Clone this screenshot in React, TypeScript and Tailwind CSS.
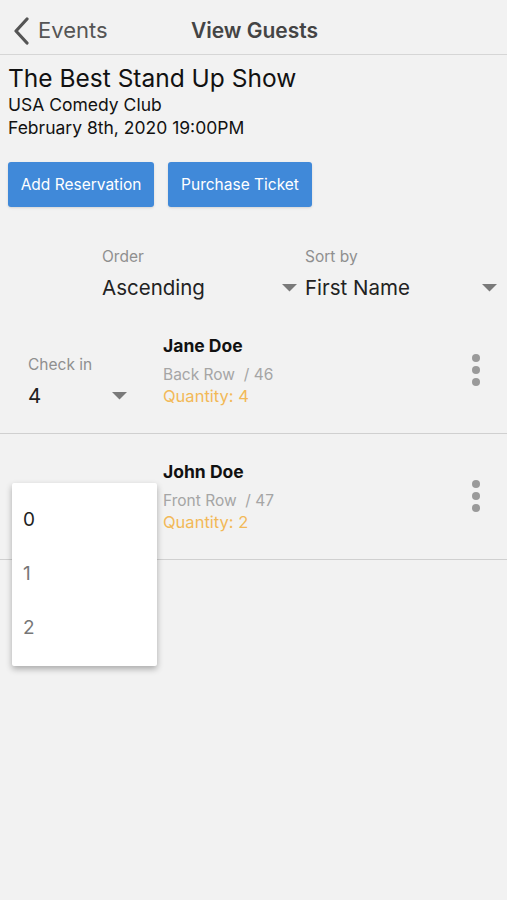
import React from 'react';

const guests = [
  { name: 'Jane Doe', row: 'Back Row', seat: 46, quantity: 4, checkIn: '4' },
  { name: 'John Doe', row: 'Front Row', seat: 47, quantity: 2, checkIn: '' },
];

function Caret({ className = '' }: { className?: string }) {
  return (
    <svg width="15" height="8" viewBox="0 0 15 8" className={className}>
      <path d="M0 0 L15 0 L7.5 7.5 Z" fill="#7a7a7a" />
    </svg>
  );
}

function Dots() {
  return (
    <div className="flex flex-col gap-[4px] items-center">
      <span className="w-[8px] h-[8px] rounded-full bg-[#9a9a9a]" />
      <span className="w-[8px] h-[8px] rounded-full bg-[#9a9a9a]" />
      <span className="w-[8px] h-[8px] rounded-full bg-[#9a9a9a]" />
    </div>
  );
}

export default function App() {
  return (
    <div
      className="w-[507px] h-[900px] bg-[#f2f2f2] relative overflow-hidden"
      style={{ fontFamily: 'Inter, "Noto Sans", sans-serif' }}
    >
      {/* Header */}
      <div className="h-[55px] pt-[7px] border-b border-[#d6d6d6] flex items-center relative">
        <div className="flex items-center pl-[12px] text-[#555] text-[22px]">
          <svg width="18" height="28" viewBox="0 0 18 28" className="mr-[8px]">
            <path d="M15 2 L4 14 L15 26" stroke="#555" strokeWidth="3.2" fill="none" strokeLinecap="round" strokeLinejoin="round" />
          </svg>
          Events
        </div>
        <div className="absolute left-0 right-0 text-center text-[21px] font-semibold text-[#444] pl-[2px]">View Guests</div>
      </div>

      {/* Event info */}
      <div className="px-[8px] pt-[8px]">
        <div className="text-[24.5px] leading-[30px] text-[#111]">The Best Stand Up Show</div>
        <div className="text-[17.5px] leading-[23px] text-[#111]">USA Comedy Club</div>
        <div className="text-[17.5px] leading-[23px] text-[#111]">February 8th, 2020 19:00PM</div>
      </div>

      {/* Buttons */}
      <div className="flex gap-[14px] px-[8px] mt-[23px]">
        <button className="h-[45px] w-[146px] rounded-[3px] bg-[#4089d9] text-white text-[15.5px] shadow-sm">Add Reservation</button>
        <button className="h-[45px] w-[144px] rounded-[3px] bg-[#4089d9] text-white text-[15.5px] shadow-sm">Purchase Ticket</button>
      </div>

      {/* Order / Sort */}
      <div className="flex gap-[8px] pl-[102px] pr-[10px] mt-[40px]">
        <div className="w-[195px]">
          <div className="text-[15.5px] text-[#8f8f8f] leading-[20px]">Order</div>
          <div className="flex items-center justify-between mt-[9px]">
            <span className="text-[20.5px] text-[#222] leading-[24px]">Ascending</span>
            <Caret />
          </div>
        </div>
        <div className="flex-1">
          <div className="text-[15.5px] text-[#8f8f8f] leading-[20px]">Sort by</div>
          <div className="flex items-center justify-between mt-[9px]">
            <span className="text-[20.5px] text-[#222] leading-[24px]">First Name</span>
            <Caret />
          </div>
        </div>
      </div>

      {/* Guest list */}
      <div className="mt-[8px]">
        {guests.map((g, i) => (
          <div key={g.name} className="h-[126px] border-b border-[#d0d0d0] flex items-start relative">
            <div className="w-[163px] pl-[28px] pt-[47px]">
              {i === 0 && (
                <>
                  <div className="text-[15.5px] text-[#8f8f8f] leading-[20px]">Check in</div>
                  <div className="flex items-center justify-between w-[99px] mt-[9px]">
                    <span className="text-[20.5px] text-[#222] leading-[24px]">{g.checkIn}</span>
                    <Caret />
                  </div>
                </>
              )}
            </div>
            <div className="pt-[27px] flex-1">
              <div className="text-[17.5px] font-bold text-[#111] leading-[22px]">{g.name}</div>
              <div className="text-[15.5px] text-[#a5a5a5] leading-[20px] mt-[8px]">
                {g.row}&nbsp;&nbsp;/ {g.seat}
              </div>
              <div className="text-[16.5px] text-[#f2b957] leading-[22px]">Quantity: {g.quantity}</div>
            </div>
            <div className="pr-[27px] pt-[46px]">
              <Dots />
            </div>
          </div>
        ))}
      </div>

      {/* Check-in dropdown menu */}
      <div className="absolute left-[12px] top-[483px] w-[145px] h-[183px] bg-white rounded-[2px] shadow-[0_3px_6px_rgba(0,0,0,0.3)] pt-[22px]">
        {['0', '1', '2'].map((n, i) => (
          <div key={n} className={`h-[54px] pl-[11px] text-[19px] leading-[30px] ${i === 0 ? 'text-[#222]' : 'text-[#777]'}`}>
            {n}
          </div>
        ))}
      </div>
    </div>
  );
}
